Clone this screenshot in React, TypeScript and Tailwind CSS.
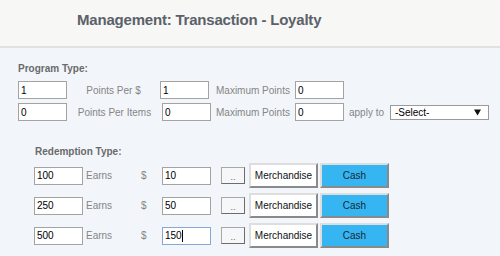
import React from "react";

const font = { fontFamily: '"Liberation Sans", Arial, sans-serif' };

const Box = ({ value, w = "w-[49px]" }: { value: string; w?: string }) => (
  <input
    readOnly
    defaultValue={value}
    className={`${w} h-[18px] border border-[#a3a3a3] bg-white px-[2px] text-[10px] text-black outline-none`}
  />
);

const FocusBox = ({ value }: { value: string }) => (
  <div className="w-[49px] h-[18px] border border-[#86a8d8] bg-white pl-[2px] flex items-center text-[10px] text-black">
    <span>{value}</span>
    <span className="w-px h-[12px] bg-black" />
  </div>
);

const RaisedButton = ({ label, blue }: { label: string; blue?: boolean }) => (
  <button
    className={`w-[69px] h-[25px] border-2 border-t-[#dedede] border-l-[#dedede] border-b-[#8a8a8a] border-r-[#8a8a8a] text-[10px] ${
      blue ? "bg-[#35b6f2] text-[#1b2733]" : "bg-white text-[#111]"
    }`}
  >
    {label}
  </button>
);

const redemptions = [
  { pts: "100", cash: "10" },
  { pts: "250", cash: "50" },
  { pts: "500", cash: "150", focus: true },
];

export default function App() {
  return (
    <div className="w-[500px] h-[256px] overflow-hidden bg-[#f2f6fa]" style={font}>
      {/* Header */}
      <div className="h-[48px] bg-[#f7f7f5] border-b-2 border-[#e1e1e1] pl-[77px] pt-[11px]">
        <h1 className="text-[15px] leading-[18px] font-bold tracking-[-0.2px] text-[#5b6168]">
          Management: Transaction - Loyalty
        </h1>
      </div>

      {/* Program type */}
      <div className="pl-[18px] pt-[15px]">
        <div className="text-[10px] leading-[12px] font-bold text-[#6a6a6a]">Program Type:</div>

        <div className="mt-[6px] flex items-center text-[10px] text-[#858585]">
          <Box value="1" />
          <span className="w-[93px] text-center">Points Per $</span>
          <Box value="1" />
          <span className="ml-[7px] w-[79px]">Maximum Points</span>
          <Box value="0" />
        </div>

        <div className="mt-[4px] flex items-center text-[10px] text-[#858585]">
          <Box value="0" />
          <span className="w-[95px] text-center">Points Per Items</span>
          <Box value="0" />
          <span className="ml-[5px] w-[79px]">Maximum Points</span>
          <Box value="0" />
          <span className="ml-[5px] w-[41px]">apply to</span>
          <div className="w-[99px] h-[15px] border border-[#9a9a9a] bg-white flex items-center justify-between pl-[4px] pr-[7px] text-black">
            <span>-Select-</span>
            <svg width="7" height="7" viewBox="0 0 7 7">
              <path d="M0 0.5 H7 L3.5 6.5 Z" fill="#111" />
            </svg>
          </div>
        </div>
      </div>

      {/* Redemption type */}
      <div className="pl-[34px] pt-[25px]">
        <div className="pl-px text-[10px] leading-[12px] font-bold text-[#6a6a6a]">Redemption Type:</div>

        <div className="mt-[5px] flex flex-col gap-[5px]">
          {redemptions.map((r) => (
            <div key={r.pts} className="flex items-center text-[10px] text-[#858585]">
              <Box value={r.pts} />
              <span className="ml-[3px] w-[55px]">Earns</span>
              <span className="w-[21px]">$</span>
              {r.focus ? <FocusBox value={r.cash} /> : <Box value={r.cash} />}
              <button className="ml-[10px] w-[24px] h-[17px] border border-t-[#a8a8a8] border-l-[#a8a8a8] border-b-[#6c6c6c] border-r-[#6c6c6c] bg-[#f5f7f9] text-[9px] leading-[18px] text-[#666]">
                ..
              </button>
              <div className="ml-[4px] flex gap-[2px]">
                <RaisedButton label="Merchandise" />
                <RaisedButton label="Cash" blue />
              </div>
            </div>
          ))}
        </div>
      </div>
    </div>
  );
}
